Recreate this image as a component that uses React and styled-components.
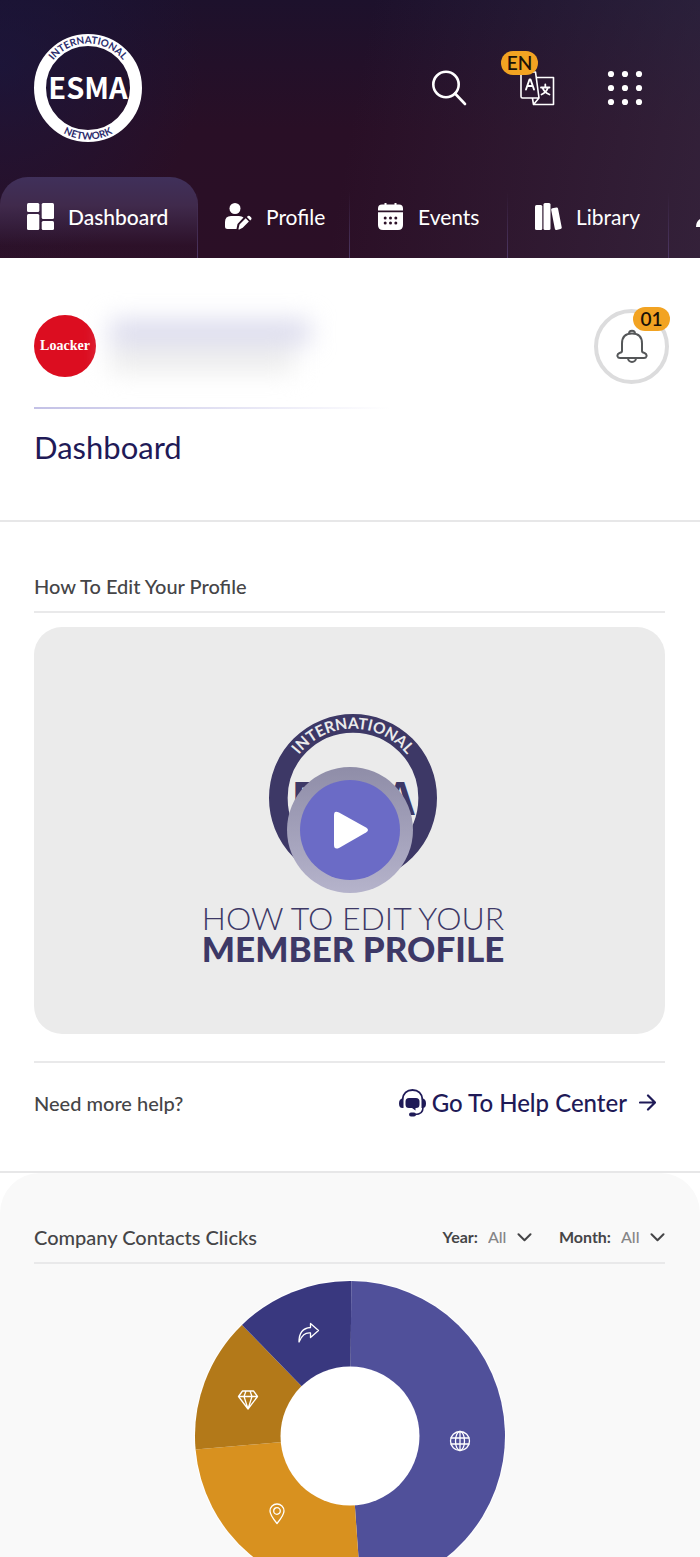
import React from "react";
import styled, { createGlobalStyle } from "styled-components";

const sans = '"Lato", "Open Sans", "Liberation Sans", sans-serif';

const GlobalStyle = createGlobalStyle`
  *, *::before, *::after { box-sizing: border-box; }
  body { margin: 0; background: #fff; font-family: ${sans}; color: #454547; }
  h1, h2, p { margin: 0; font-weight: 500; }
  a { color: inherit; text-decoration: none; }
  button { font: inherit; border: 0; padding: 0; background: none; cursor: pointer; }
  svg { display: block; flex: none; }
`;

/* ---------- header ---------- */

const Header = styled.header`
  background:
    radial-gradient(circle at 0 25%, rgba(24, 24, 66, 0.6), transparent 28%),
    linear-gradient(100deg, transparent 50%, rgba(62, 54, 80, 0.5) 105%),
    linear-gradient(180deg, #1d112c 0%, #290f26 50%, #2b0f26 100%);
  color: #fff;
  overflow: hidden;
`;

const TopBar = styled.div`
  display: flex;
  align-items: center;
  justify-content: space-between;
  padding: 34px 57px 35px 34px;
`;

const Actions = styled.div`
  display: flex;
  align-items: center;
  gap: 52px;
`;

const IconButton = styled.button`
  position: relative;
  display: block;
  color: #fff;
`;

const Badge = styled.span`
  position: absolute;
  top: ${(p) => p.$top};
  left: ${(p) => p.$left};
  width: 37px;
  height: 24px;
  border-radius: 12px;
  background: #f2a322;
  color: #1a1208;
  font-size: 19px;
  line-height: 24px;
  font-weight: 600;
  text-align: center;
`;

const Tabs = styled.nav`
  display: grid;
  grid-template-columns: 198px 152px 158px 161px 160px;
`;

const Tab = styled.a`
  position: relative;
  display: flex;
  align-items: center;
  gap: 14px;
  height: 81px;
  padding: 0 0 2px 27px;
  font-size: 21px;
  line-height: 24px;
  font-weight: ${(p) => (p.$active ? 500 : 400)};
  border-radius: ${(p) => (p.$active ? "28px 28px 0 0" : "0")};
  background: ${(p) =>
    p.$active ? "linear-gradient(180deg, #40305a 0%, #402a4c 35%, rgba(50, 24, 50, 0.2) 85%)" : "none"};
  &::after {
    content: "";
    position: absolute;
    right: 0;
    bottom: 0;
    width: 1px;
    height: 66px;
    background: linear-gradient(180deg, transparent, #4d3763);
  }
`;

/* ---------- member ---------- */

const Member = styled.section`
  padding: 49px 31px 54px 34px;
  border-bottom: 2px solid #e7e7e8;
`;

const MemberRow = styled.div`
  display: flex;
  align-items: center;
  gap: 14px;
  height: 78px;
`;

const Avatar = styled.span`
  display: grid;
  place-items: center;
  width: 62px;
  height: 62px;
  border-radius: 50%;
  background: #dc0d20;
  color: #fff;
  font: 700 14px/20px "Liberation Serif", serif;
`;

const Hidden = styled.div`
  display: grid;
  gap: 4px;
  filter: blur(12px);
`;

const HiddenLine = styled.div`
  width: ${(p) => p.$width};
  height: 24px;
  background: ${(p) => p.$tone};
`;

const Bell = styled.button`
  position: relative;
  display: grid;
  place-items: center;
  width: 75px;
  height: 75px;
  margin-left: auto;
  border: 4px solid #dcdcdd;
  border-radius: 50%;
  color: #555759;
`;

const Fade = styled.div`
  max-width: 356px;
  height: 2px;
  margin-top: 22px;
  background: linear-gradient(90deg, #c3c1e6, rgba(195, 193, 230, 0));
`;

const Title = styled.h1`
  margin-top: 19px;
  font-size: 31px;
  line-height: 38px;
  font-weight: 400;
  color: #1f1a57;
`;

/* ---------- tutorial ---------- */

const Tutorial = styled.section`
  padding: 49px 35px 0 34px;
  border-bottom: 2px solid #e7e7e8;
`;

const SectionHead = styled.div`
  display: flex;
  align-items: center;
  justify-content: space-between;
  height: 42px;
  padding-bottom: 10px;
  border-bottom: 2px solid #e9e9ea;
`;

const SectionTitle = styled.h2`
  font-size: 20px;
  line-height: 30px;
  font-weight: 500;
`;

const Video = styled.button`
  position: relative;
  display: flex;
  flex-direction: column;
  align-items: center;
  width: 100%;
  height: 407px;
  margin-top: 14px;
  padding: 87px 0 0 7px;
  border-radius: 28px;
  background: #ebebeb;
  color: #3d3866;
`;

const Caption = styled.span`
  font-size: ${(p) => (p.$strong ? "35px" : "32px")};
  line-height: 31px;
  font-weight: ${(p) => (p.$strong ? 900 : 300)};
  margin-top: ${(p) => (p.$strong ? "0" : "20px")};
  white-space: nowrap;
`;

const Play = styled.span`
  position: absolute;
  inset: 140px 0 auto;
  margin: 0 auto;
  display: grid;
  place-items: center;
  width: 126px;
  height: 126px;
  border: 13px solid transparent;
  border-radius: 50%;
  background:
    linear-gradient(#6b6bc6, #6b6bc6) padding-box,
    linear-gradient(180deg, #8f8da8, #b5b3cb) border-box;
`;

const HelpRow = styled.div`
  display: flex;
  align-items: center;
  justify-content: space-between;
  height: 110px;
  margin-top: 27px;
  padding: 0 9px 29px 0;
  border-top: 2px solid #e9e9ea;
  font-size: 20px;
  line-height: 30px;
`;

const HelpLink = styled.a`
  display: flex;
  align-items: center;
  gap: 6px;
  font-size: 24px;
  font-weight: 500;
  color: #1f1a57;
  svg:last-child { margin-left: 6px; }
`;

/* ---------- clicks ---------- */

const Clicks = styled.section`
  padding: 49px 35px 0 34px;
  border-radius: 40px 40px 0 0;
  background: #f9f9f9;
`;

const Filters = styled.div`
  display: flex;
  gap: 27px;
`;

const Filter = styled.label`
  position: relative;
  display: flex;
  align-items: center;
  gap: 10px;
  font-size: 16px;
  line-height: 24px;
  font-weight: 700;
  svg { position: absolute; right: 0; top: 8px; pointer-events: none; }
`;

const Select = styled.select`
  appearance: none;
  width: 44px;
  height: 24px;
  padding: 0;
  border: 0;
  background: none;
  color: #858587;
  font: 500 16px/24px ${sans};
`;

const Chart = styled.svg`
  width: 312px;
  height: 312px;
  margin: 16px auto 0;
`;

/* ---------- drawings ---------- */

function Logo({ size, ink, paper, name }) {
  return (
    <svg width={size} height={size} viewBox="0 0 108 108" role="img" aria-label="ESMA International Network">
      <defs>
        <path id={`${name}-top`} d="M9.500 54a44.500 44.500 0 0 1 89 0" />
        <path id={`${name}-low`} d="M2.500 54a51.500 51.500 0 0 0 103 0" />
      </defs>
      <circle cx="54" cy="54" r="48" fill="none" stroke={ink} strokeWidth="12" />
      <g fill={paper} fontFamily="Lato, sans-serif" fontWeight="700" fontSize="10" textAnchor="middle">
        <text><textPath href={`#${name}-top`} startOffset="50%">INTERNATIONAL</textPath></text>
        <text><textPath href={`#${name}-low`} startOffset="50%">NETWORK</textPath></text>
      </g>
      <text
        x="54"
        y="65"
        fill={ink}
        fontFamily="'Noto Sans CJK JP', 'Noto Sans', sans-serif"
        fontWeight="700"
        fontSize="29"
        textAnchor="middle"
      >
        ESMA
      </text>
    </svg>
  );
}

const SearchIcon = () => (
  <svg width="36" height="36" viewBox="0 0 36 36" fill="none" stroke="currentColor" strokeWidth="2.600" strokeLinecap="round">
    <circle cx="14" cy="14.500" r="12.700" />
    <path d="M23 23.500 33 34" />
  </svg>
);

const TranslateIcon = () => (
  <svg width="35" height="35" viewBox="0 0 35 35" fill="none" stroke="currentColor" strokeWidth="1.600" strokeLinecap="round" strokeLinejoin="round">
    <path d="M1 1h14.500l3.500 26H2.500Q1 27 1 25.500ZM17 6.500h16.500V33.500H13.500L12.500 27.500M13.500 33.500 19 27" />
    <path d="M6 18.500 9.500 8.500h1L14 18.500M7.300 15h5.400" strokeWidth="1.900" />
    <path d="M21 16.500h8.500M25.300 13.500v3M28 16.500Q26.500 21.500 21.500 23.500M22.500 16.500Q24 21.500 29.500 23.500" strokeWidth="1.800" />
  </svg>
);

const AppsIcon = () => (
  <svg width="36" height="36" viewBox="0 0 36 36" fill="currentColor">
    {[4, 18, 32].map((y) => [4, 18, 32].map((x) => <circle key={`${x}-${y}`} cx={x} cy={y} r="3.100" />))}
  </svg>
);

const BoardIcon = () => (
  <svg width="27" height="27" viewBox="0 0 27 27" fill="currentColor">
    <rect width="12.300" height="9" rx="1.500" />
    <rect y="11" width="12.300" height="16" rx="1.500" />
    <rect x="14.700" width="12.300" height="16" rx="1.500" />
    <rect x="14.700" y="18" width="12.300" height="9" rx="1.500" />
  </svg>
);

const ProfileIcon = () => (
  <svg width="27" height="27" viewBox="0 0 27 27" fill="currentColor">
    <circle cx="10" cy="5.500" r="5.500" />
    <path d="M6 13h8q3 0 4.500 1.500L12.500 21 11.500 26H2.500Q0 26 0 23.500V19Q0 13 6 13Z" />
    <path d="M14.500 21.500 20.700 15.300l3.200 3.200-6.200 6.200-3.400 1.800q-1 .300-.8-.8ZM21.900 14.100l1-1q.9-.8 1.800 0l1.500 1.500q.8.900 0 1.800l-1 1Z" />
  </svg>
);

const EventsIcon = () => (
  <svg width="27" height="27" viewBox="0 0 27 27">
    <g fill="currentColor">
      <path d="M5 1.500h2.500V0h2v1.500h8V0h2v1.500H22q4 0 4 4v2H1v-2q0-4 4-4Z" />
      <path d="M1 9.300h25V22q0 5-5 5H6q-5 0-5-5Z" />
    </g>
    <g fill="#2d1229">
      {[15, 20].map((y) => [8.2, 13.5, 18.8].map((x) => <circle key={`${x}-${y}`} cx={x} cy={y} r="1.500" />))}
    </g>
  </svg>
);

const LibraryIcon = () => (
  <svg width="27" height="27" viewBox="0 0 27 27" fill="currentColor">
    <rect y="2" width="7.300" height="25" rx="1.500" />
    <rect x="8.500" width="7" height="27" rx="1.500" />
    <rect x="18" y="4.800" width="7" height="22" rx="1.500" transform="rotate(-11 21 16)" />
  </svg>
);

const MembersIcon = () => (
  <svg width="27" height="27" viewBox="0 0 27 27" fill="currentColor">
    <circle cx="13" cy="6" r="6" />
    <path d="M0 24q0-10 13-10t13 10Z" />
  </svg>
);

const BellIcon = () => (
  <svg width="32" height="35" viewBox="0 0 32 35" fill="none" stroke="currentColor" strokeWidth="2" strokeLinejoin="round">
    <path d="M6 22V14.500Q6 4.500 16 4.500T26 14.500V22Q26 23.500 28.500 24 31 25 30.500 27.200 30 29 28 29H4Q2 29 1.500 27.200 1 25 3.500 24 6 23.500 6 22Z" />
    <path d="M13 4.700a3 3 0 1 1 6 0M12 29a4 4 0 0 0 8 0" />
  </svg>
);

const HeadsetIcon = () => (
  <svg width="27" height="28" viewBox="0 0 27 28" fill="currentColor">
    <path d="M3.500 10.500C4 4.500 8 1 13.500 1S23 4.500 23.500 10.500" fill="none" stroke="currentColor" strokeWidth="1.800" />
    <path d="M4.500 9.500v9.500H3.500Q0 19 0 14.500T3.500 9.500ZM22.500 9.500v9.500h1Q27 19 27 14.500T23.500 9.500Z" />
    <path d="M10 9h7q3.500 0 3.500 3.500v3Q20.500 19 17 19h-.5v2.500L13 19h-3Q6.500 19 6.500 15.500v-3Q6.500 9 10 9Z" />
    <path d="M24 18.500Q24 25.500 16 25.500" fill="none" stroke="currentColor" strokeWidth="1.600" />
    <rect x="10" y="23.500" width="7" height="4" rx="2" />
  </svg>
);

const ArrowIcon = () => (
  <svg width="17" height="17" viewBox="0 0 17 17" fill="none" stroke="currentColor" strokeWidth="2.200" strokeLinecap="round" strokeLinejoin="round">
    <path d="M1 8.500h15M9 1.500l7 7-7 7" />
  </svg>
);

const Chevron = () => (
  <svg width="15" height="9" viewBox="0 0 15 9" fill="none" stroke="currentColor" strokeWidth="2" strokeLinecap="round" strokeLinejoin="round">
    <path d="m1.500 1.300 6 6 6-6" />
  </svg>
);

const center = 156;
const outer = 155;

const slices = [
  { from: 0.5, to: 176, color: "#50509a" },
  { from: 176, to: 265, color: "#d8911f" },
  { from: 265, to: 315.8, color: "#b37919" },
  { from: 315.8, to: 360.5, color: "#39387f" },
];

const point = (deg) => {
  const rad = (deg * Math.PI) / 180;
  return `${center + outer * Math.sin(rad)} ${center - outer * Math.cos(rad)}`;
};

function Donut() {
  return (
    <Chart viewBox="0 0 312 312" role="img" aria-label="Company contacts clicks by type">
      <circle cx={center} cy={center} r="156" fill="#fff" />
      {slices.map((s) => (
        <path
          key={s.color}
          fill={s.color}
          d={`M${center} ${center}L${point(s.from)}A${outer} ${outer} 0 0 1 ${point(s.to)}Z`}
        />
      ))}
      <circle cx={center} cy={center} r="69.500" fill="#fff" />
      <g fill="none" stroke="#fff" strokeWidth="1.300" strokeLinejoin="round" strokeLinecap="round">
        <g transform="translate(266 161)">
          <circle r="9.500" />
          <ellipse rx="4.500" ry="9.500" />
          <path d="M0-9.500v19M-9-3H9M-9 3H9" />
        </g>
        <g transform="translate(83 234)">
          <path d="M0 9.500Q-7 1-7-3a7 7 0 0 1 14 0Q7 1 0 9.500Z" />
          <circle cy="-3" r="3.300" />
        </g>
        <g transform="translate(54 120)">
          <path d="M-5.500-9h11L9.500-3.500 0 9-9.500-3.500ZM-9.500-3.500h19M-2-9-4-3.500 0 9 4-3.500 2-9" />
        </g>
        <g transform="translate(115 53)">
          <path d="M-10 9C-10-1-6-5 1.500-5.500V-9.500L9.500-2.500 1.500 4.500V0C-4-.5-7 2-10 9Z" />
        </g>
      </g>
    </Chart>
  );
}

const tabs = [
  ["Dashboard", BoardIcon],
  ["Profile", ProfileIcon],
  ["Events", EventsIcon],
  ["Library", LibraryIcon],
];

export default function App() {
  return (
    <>
      <GlobalStyle />
      <Header>
        <TopBar>
          <Logo size={108} ink="#fff" paper="#2b2c6c" name="brand" />
          <Actions>
            <IconButton aria-label="Search"><SearchIcon /></IconButton>
            <IconButton aria-label="Language">
              <TranslateIcon />
              <Badge $top="-20px" $left="-19px">EN</Badge>
            </IconButton>
            <IconButton aria-label="Apps"><AppsIcon /></IconButton>
          </Actions>
        </TopBar>
        <Tabs>
          {tabs.map(([label, Icon], i) => (
            <Tab key={label} href="#" $active={i === 0}>
              <Icon />
              {label}
            </Tab>
          ))}
          <Tab href="#" aria-label="Members"><MembersIcon /></Tab>
        </Tabs>
      </Header>

      <main>
        <Member>
          <MemberRow>
            <Avatar>Loacker</Avatar>
            <Hidden aria-hidden="true">
              <HiddenLine $width="200px" $tone="#d9d9ec" />
              <HiddenLine $width="184px" $tone="#ececec" />
            </Hidden>
            <Bell aria-label="Notifications">
              <BellIcon />
              <Badge $top="-6px" $left="35px">01</Badge>
            </Bell>
          </MemberRow>
          <Fade />
          <Title>Dashboard</Title>
        </Member>

        <Tutorial>
          <SectionHead>
            <SectionTitle>How To Edit Your Profile</SectionTitle>
          </SectionHead>
          <Video aria-label="Play video">
            <Logo size={168} ink="#3d3866" paper="#ebebeb" name="poster" />
            <Caption>HOW TO EDIT YOUR</Caption>
            <Caption $strong>MEMBER PROFILE</Caption>
            <Play>
              <svg width="36" height="38" viewBox="0 0 36 38" fill="#fff">
                <path d="M2 4Q2-1 7 1.500L34 16.500Q38 19 34 21.500L7 37Q2 39 2 34Z" />
              </svg>
            </Play>
          </Video>
          <HelpRow>
            <p>Need more help?</p>
            <HelpLink href="#">
              <HeadsetIcon />
              Go To Help Center
              <ArrowIcon />
            </HelpLink>
          </HelpRow>
        </Tutorial>

        <Clicks>
          <SectionHead>
            <SectionTitle>Company Contacts Clicks</SectionTitle>
            <Filters>
              <Filter>
                Year:
                <Select defaultValue="All"><option>All</option></Select>
                <Chevron />
              </Filter>
              <Filter>
                Month:
                <Select defaultValue="All"><option>All</option></Select>
                <Chevron />
              </Filter>
            </Filters>
          </SectionHead>
          <Donut />
        </Clicks>
      </main>
    </>
  );
}
